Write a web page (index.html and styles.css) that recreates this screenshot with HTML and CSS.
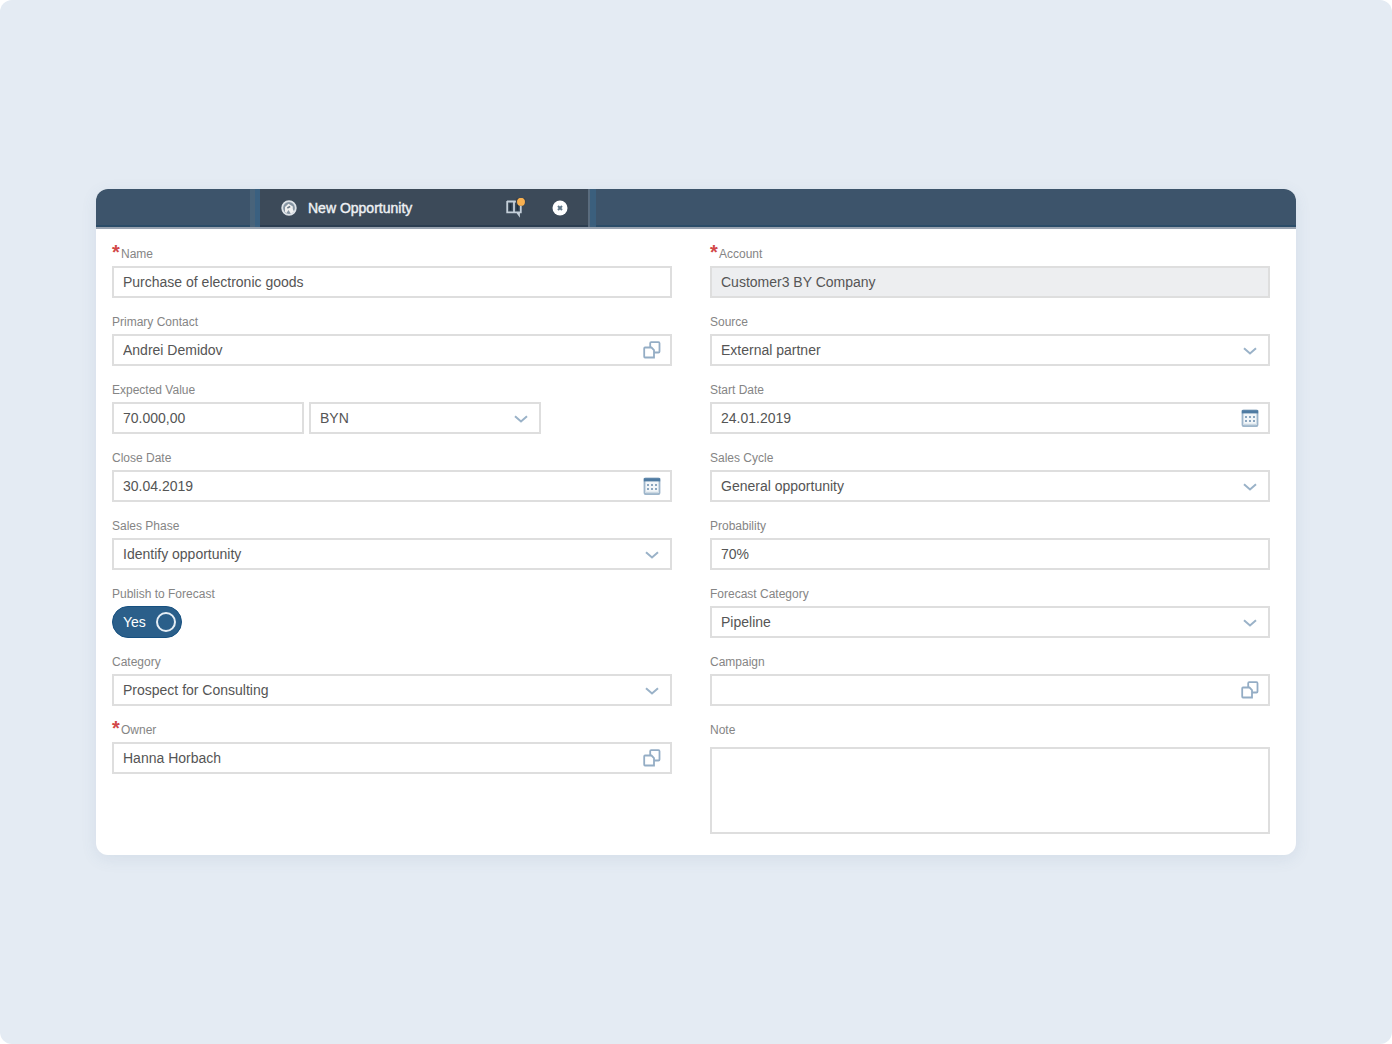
FILE: index.html
```html
<!DOCTYPE html>
<html lang="en">
<head>
<meta charset="utf-8">
<title>New Opportunity</title>
<link rel="stylesheet" href="styles.css">
</head>
<body>
<svg class="sprite" aria-hidden="true">
  <symbol id="chevron" viewBox="0 0 16 16"><path d="M2 6.2L8 11.400L14 6.200" fill="none" stroke="#9ab2c8" stroke-width="2"/></symbol>
  <symbol id="lookup" viewBox="0 0 18 18"><path d="M7.200 6V2.200Q7.200 1.200 8.200 1.200H15.500Q16.500 1.200 16.500 2.200V10.500Q16.500 11.500 15.500 11.500H11.500M2 6.500H8.500L11 9V16.500H2Q1.200 16.500 1.200 15.500V7.500Q1.200 6.500 2 6.500Z" fill="none" stroke="#94adc5" stroke-width="1.800"/></symbol>
  <symbol id="calendar" viewBox="0 0 18 18"><rect x="1.500" y="1.500" width="15" height="15.500" rx="1" fill="#f2f6f9" stroke="#9db5ca" stroke-width="1.800"/><path d="M.8 2.800H17.200" stroke="#4f7ba2" stroke-width="3.200"/><path d="M4 8H14M4 12H14" stroke="#8ba6bf" stroke-width="2" stroke-dasharray="2 2"/><path d="M3 15.500H15" stroke="#cbd8e3" stroke-width="1.500"/></symbol>
</svg>
<main class="card">
  <header class="tabs">
    <div class="tab">
      <svg width="16" height="16" viewBox="0 0 16 16"><circle cx="8" cy="8" r="6.800" fill="#8695a3" stroke="#dde2e7" stroke-width="1.800"/><path d="M4 12V7L7.500 3.800L11.800 6.500V9L13 11.500L10 14L7.500 10L5.500 13Z" fill="#f0f0f0"/><path d="M6.300 8L9.200 6.500" stroke="#6b7987" stroke-width="1.500"/></svg>
      <span class="tab-title">New Opportunity</span>
      <button class="tab-button" type="button" aria-label="Notes"><svg width="22" height="20" viewBox="0 0 22 20"><path d="M3 3.500H14M3.200 3V14.400H16.800V6M13.200 14.500L15 17V14" fill="none" stroke="#c4cfd9" stroke-width="1.800"/><path d="M10 4V14" stroke="#c4cfd9" stroke-width="1.800"/><path d="M6.500 5.500V12.500M13.500 6.500V12.500" stroke="#1f2e3e" stroke-width="2"/><circle cx="16.800" cy="2.800" r="5" fill="#3a4149"/><circle cx="17" cy="3.500" r="3.500" fill="#f8b050"/><circle cx="17" cy="3.900" r="3.900" fill="#f8b050"/></svg></button>
      <button class="tab-button" type="button" aria-label="Close"><svg width="16" height="16" viewBox="0 0 16 16"><circle cx="8" cy="8" r="7.500" fill="#fff"/><path d="M6 6L10 10M10 6L6 10" stroke="#60788a" stroke-width="2"/></svg></button>
    </div>
  </header>
  <form class="form">
    <div class="column">
      <div class="field"><label for="name"><span class="required">*</span>Name</label><div class="control"><input id="name" type="text" value="Purchase of electronic goods"></div></div>
      <div class="field"><label for="contact">Primary Contact</label><div class="control"><input id="contact" type="text" value="Andrei Demidov"><button class="action" type="button" aria-label="Select contact"><svg width="18" height="18"><use href="#lookup"/></svg></button></div></div>
      <div class="field"><label for="value">Expected Value</label><div class="pair"><div class="control amount"><input id="value" type="text" value="70.000,00"></div><div class="control currency"><select aria-label="Currency"><option>BYN</option></select><svg class="arrow" width="16" height="16"><use href="#chevron"/></svg></div></div></div>
      <div class="field"><label for="close">Close Date</label><div class="control"><input id="close" type="text" value="30.04.2019"><button class="action" type="button" aria-label="Pick close date"><svg width="18" height="18"><use href="#calendar"/></svg></button></div></div>
      <div class="field"><label for="phase">Sales Phase</label><div class="control"><select id="phase"><option>Identify opportunity</option></select><svg class="arrow" width="16" height="16"><use href="#chevron"/></svg></div></div>
      <div class="field"><label for="publish">Publish to Forecast</label><label class="switch"><input id="publish" type="checkbox" checked><span>Yes</span><span class="knob"></span></label></div>
      <div class="field"><label for="category">Category</label><div class="control"><select id="category"><option>Prospect for Consulting</option></select><svg class="arrow" width="16" height="16"><use href="#chevron"/></svg></div></div>
      <div class="field"><label for="owner"><span class="required">*</span>Owner</label><div class="control"><input id="owner" type="text" value="Hanna Horbach"><button class="action" type="button" aria-label="Select owner"><svg width="18" height="18"><use href="#lookup"/></svg></button></div></div>
    </div>
    <div class="column">
      <div class="field"><label for="account"><span class="required">*</span>Account</label><div class="control"><input id="account" type="text" value="Customer3 BY Company" readonly></div></div>
      <div class="field"><label for="source">Source</label><div class="control"><select id="source"><option>External partner</option></select><svg class="arrow" width="16" height="16"><use href="#chevron"/></svg></div></div>
      <div class="field"><label for="start">Start Date</label><div class="control"><input id="start" type="text" value="24.01.2019"><button class="action" type="button" aria-label="Pick start date"><svg width="18" height="18"><use href="#calendar"/></svg></button></div></div>
      <div class="field"><label for="cycle">Sales Cycle</label><div class="control"><select id="cycle"><option>General opportunity</option></select><svg class="arrow" width="16" height="16"><use href="#chevron"/></svg></div></div>
      <div class="field"><label for="probability">Probability</label><div class="control"><input id="probability" type="text" value="70%"></div></div>
      <div class="field"><label for="forecast">Forecast Category</label><div class="control"><select id="forecast"><option>Pipeline</option></select><svg class="arrow" width="16" height="16"><use href="#chevron"/></svg></div></div>
      <div class="field"><label for="campaign">Campaign</label><div class="control"><input id="campaign" type="text"><button class="action" type="button" aria-label="Select campaign"><svg width="18" height="18"><use href="#lookup"/></svg></button></div></div>
      <div class="field note"><label for="note">Note</label><textarea id="note"></textarea></div>
    </div>
  </form>
</main>
</body>
</html>
```
FILE: styles.css
```css
* { box-sizing: border-box; }
html { background: #fff; }
body {
  margin: 0;
  min-height: 100vh;
  padding: 48px 96px;
  display: flex;
  align-items: center;
  background: #e4ebf3;
  border-radius: 12px;
  font: 14px/20px "Liberation Sans", Arial, sans-serif;
  color: #555;
}
.sprite { position: absolute; width: 0; height: 0; }
button { padding: 0; border: 0; background: none; cursor: pointer; }
svg { display: block; }
.card {
  flex: 1;
  min-width: 0;
  background: #fff;
  border-radius: 12px;
  overflow: hidden;
  box-shadow: 0 4px 16px rgba(80, 105, 145, 0.1);
}

/* Tab strip */
.tabs {
  height: 40px;
  padding-left: 154px;
  display: flex;
  background: #3d546b;
  border-bottom: 2px solid #99a3b0;
  box-shadow: inset 0 -2px #2b4c68;
}
.tab {
  width: 340px;
  padding: 0 20px 0 26px;
  display: flex;
  align-items: center;
  background: #3c4a59;
  border-left: 5px solid #48637a;
  border-right: 2px solid #5a6c7e;
  box-shadow: inset 5px 0 #3a6080, inset 0 -2px #2b3d50, 6px 0 #3b5f7d;
}
.tab-title {
  flex: 1;
  margin-left: 11px;
  color: #eef1f4;
  -webkit-text-stroke: 0.4px #eef1f4;
}
.tab-button + .tab-button { margin-left: 26px; }

/* Form */
.form { display: flex; gap: 38px; padding: 17px 26px 21px 16px; }
.column { flex: 1; min-width: 0; display: flex; flex-direction: column; gap: 16px; }
.field { display: flex; flex-direction: column; gap: 4px; }
.field > label:first-child { display: flex; font-size: 12px; line-height: 16px; color: #858585; }
.required { width: 9px; font-size: 20px; line-height: 12px; height: 16px; font-weight: 700; color: #d24848; }
.control { display: grid; align-items: center; }
.control > * { grid-area: 1 / 1; }
.control input, .control select, textarea {
  width: 100%;
  height: 32px;
  margin: 0;
  padding: 0 40px 0 9px;
  border: 2px solid #dedede;
  border-radius: 0;
  background: #fff;
  color: #555;
  font: inherit;
  appearance: none;
  outline: 0;
}
.control input[readonly] { background: #edeef0; }
.arrow, .action { justify-self: end; margin-right: 12px; }
.action { margin-right: 11px; }
.arrow { pointer-events: none; }
.pair { display: flex; gap: 5px; }
.amount { width: 192px; }
.currency { width: 232px; }
.note { gap: 9px; }
.note textarea { display: block; height: 87px; padding: 8px; resize: none; }
.switch {
  width: 70px;
  height: 32px;
  padding: 0 5px 0 10px;
  display: flex;
  align-items: center;
  justify-content: space-between;
  border: 1px solid #165080;
  border-radius: 16px;
  background: #2b5f8a;
  color: #fff;
  cursor: pointer;
}
.switch input { position: absolute; opacity: 0; }
.knob { width: 20px; height: 20px; border: 2px solid #e6eef5; border-radius: 50%; }
```
